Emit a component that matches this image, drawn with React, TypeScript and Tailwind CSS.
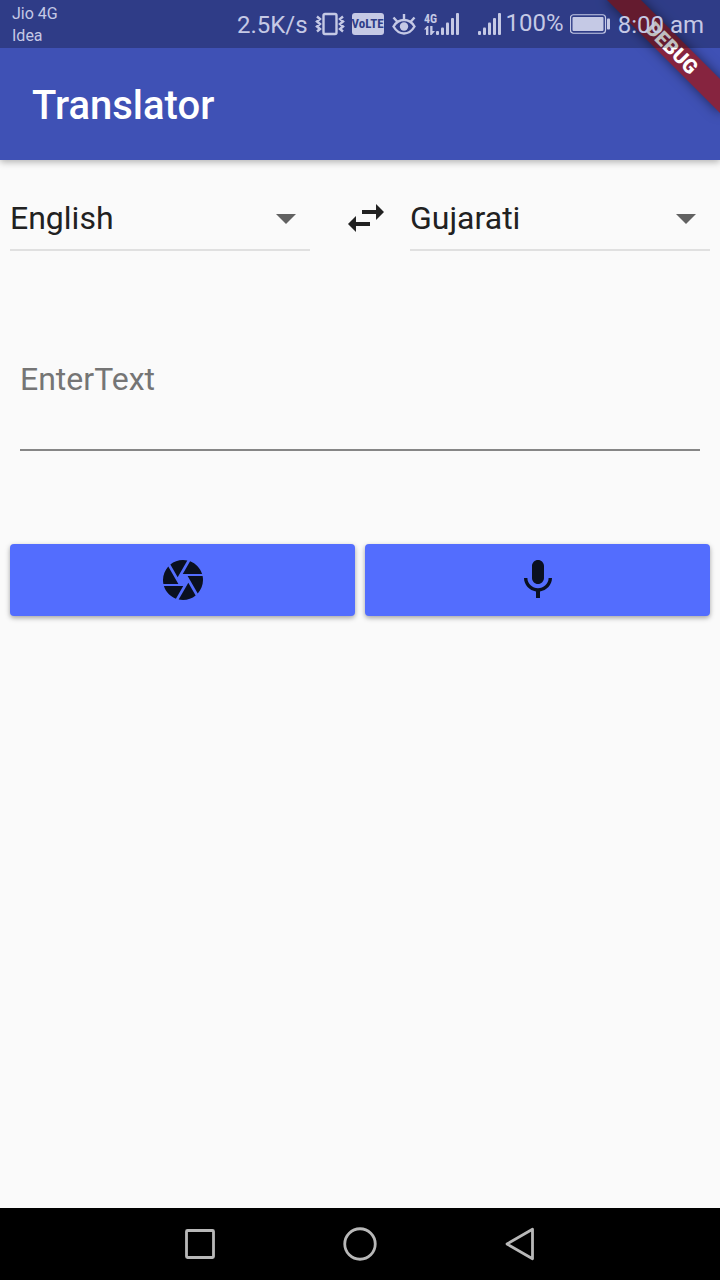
import { useState } from "react";

const LANGUAGES = ["English", "Gujarati", "Hindi", "French", "Spanish"];

function VibrateIcon() {
  return (
    <svg className="h-6 w-8 shrink-0" viewBox="0 0 32 24" fill="none" stroke="currentColor" aria-hidden="true">
      <rect x="9.500" y="2" width="13" height="20" rx="1.500" strokeWidth="2.400" />
      <path d="M3 4.500l3 2.500-3 2.500 3 2.500-3 2.500 3 2.500-3 2.500M29 4.500l-3 2.500 3 2.500-3 2.500 3 2.500-3 2.500 3 2.500" strokeWidth="2.400" />
    </svg>
  );
}

function EyeIcon() {
  return (
    <svg className="h-6 w-6 shrink-0" viewBox="0 0 24 24" fill="none" stroke="currentColor" strokeWidth="2.400" aria-hidden="true">
      <path d="M1.500 14.500C4 10.300 7.700 8 12 8s8 2.300 10.500 6.500c-2.500 4.200-6.200 7-10.500 7s-8-2.800-10.500-7z" />
      <circle cx="12" cy="14.500" r="4.200" fill="currentColor" stroke="none" />
      <path d="M12 8V2M5.500 10L1.500 5.500M18.500 10l4-4.500" />
    </svg>
  );
}

function DataSignalIcon() {
  return (
    <svg className="h-6 w-9 shrink-0" viewBox="0 0 36 24" fill="currentColor" aria-hidden="true">
      <text x="0" y="10.500" fontFamily="'Roboto Condensed', 'Liberation Sans Narrow', Roboto, sans-serif" fontSize="12" fontWeight="700">4G</text>
      <path d="M3 14L0 17.500h2V23h2.400v-9zM6.200 14v9h1.400L11 19H8.500v-5z" />
      <rect x="12" y="19" width="3" height="4" rx="1" />
      <rect x="17" y="15.500" width="3" height="7.500" rx="1" />
      <rect x="22" y="10.500" width="3" height="12.500" rx="1" />
      <rect x="27" y="6" width="3" height="17" rx="1" />
      <rect x="32" y="1" width="3" height="22" rx="1" />
    </svg>
  );
}

function SignalIcon() {
  return (
    <svg className="h-6 w-6 shrink-0" viewBox="0 0 24 24" fill="currentColor" aria-hidden="true">
      <rect x="0" y="19" width="3" height="4" rx="1" />
      <rect x="5" y="15.500" width="3" height="7.500" rx="1" />
      <rect x="10" y="10.500" width="3" height="12.500" rx="1" />
      <rect x="15" y="6" width="3" height="17" rx="1" />
      <rect x="20" y="1" width="3" height="22" rx="1" />
    </svg>
  );
}

function BatteryIcon() {
  return (
    <svg className="h-5 w-10 shrink-0" viewBox="0 0 40 20" fill="currentColor" aria-hidden="true">
      <rect x="0.500" y="0.750" width="35" height="18.500" rx="3" fill="none" stroke="currentColor" strokeWidth="1.200" />
      <rect x="2.500" y="3" width="31" height="14" rx="1" />
      <rect x="37" y="4.500" width="3" height="11" rx="0.800" />
    </svg>
  );
}

function StatusBar() {
  return (
    <div className="relative flex h-12 items-center justify-between bg-black/25 pt-0.5 pr-4 pl-3 text-2xl leading-6 text-[#c5c9e5]">
      <div className="text-base leading-[22px] whitespace-nowrap">
        <p>Jio 4G</p>
        <p>Idea</p>
      </div>
      <div className="flex items-center whitespace-nowrap">
        <span className="mr-2">2.5K/s</span>
        <div className="-ml-0.5 flex items-center gap-2 pb-0.5">
          <VibrateIcon />
          <span className="-ml-0.5 flex h-[22px] w-8 items-center justify-center rounded-[3px] bg-[#c5c9e5] font-['Roboto_Condensed','Liberation_Sans_Narrow',Roboto,sans-serif] text-[13px] font-bold text-[#2f3d88]">
            VoLTE
          </span>
          <EyeIcon />
          <DataSignalIcon />
        </div>
        <div className="ml-[18px] flex items-center pb-0.5">
          <SignalIcon />
          <span className="ml-1 pb-0.5">100%</span>
        </div>
        <div className="ml-1.5 flex items-center gap-2">
          <span className="pb-0.5">
            <BatteryIcon />
          </span>
          <span>8:00 am</span>
        </div>
      </div>
    </div>
  );
}

function DebugBanner() {
  return (
    <div className="absolute top-9 -right-8 flex h-6 w-40 rotate-45 items-center justify-center bg-[#86243f] text-xl leading-6 font-black text-white shadow-[0_0_12px_rgba(0,0,0,0.5)]">
      DEBUG
    </div>
  );
}

function LanguageSelect({ label, value, onChange }: { label: string; value: string; onChange: (v: string) => void }) {
  return (
    <div className="relative min-w-0 flex-1 border-b-2 border-[#e0e0e0] pb-[7px]">
      <select
        aria-label={label}
        value={value}
        onChange={(e) => onChange(e.target.value)}
        className="block h-12 w-full appearance-none bg-transparent p-0 text-[32px] text-[#212121] outline-none"
      >
        {LANGUAGES.map((l) => (
          <option key={l}>{l}</option>
        ))}
      </select>
      <svg className="pointer-events-none absolute top-0 right-0 size-12 text-[#616161]" viewBox="0 0 24 24" fill="currentColor" aria-hidden="true">
        <path d="M7 10l5 5 5-5z" />
      </svg>
    </div>
  );
}

const actionClass =
  "flex h-[72px] flex-1 items-center justify-center rounded bg-[#536dfe] text-[#0a1020] shadow-[0_2px_5px_rgba(0,0,0,0.35)]";

export default function App() {
  const [from, setFrom] = useState("English");
  const [to, setTo] = useState("Gujarati");
  const [text, setText] = useState("");

  const swap = () => {
    setFrom(to);
    setTo(from);
  };

  return (
    <div className="flex min-h-screen flex-col overflow-hidden bg-[#fafafa] font-['Roboto',sans-serif]">
      <header className="relative bg-[#3f51b5] shadow-[0_2px_7px_rgba(0,0,0,0.3)]">
        <DebugBanner />
        <StatusBar />
        <h1 className="flex h-28 items-center px-8 pt-1 text-[40px] font-medium text-white">Translator</h1>
      </header>

      <main className="flex-1 px-[10px] pt-[34px]">
        <div className="flex items-start">
          <LanguageSelect label="Translate from" value={from} onChange={setFrom} />
          <div className="flex w-[100px] justify-center pl-3">
            <button type="button" aria-label="Swap languages" onClick={swap} className="text-[#212121]">
              <svg className="size-12" viewBox="0 0 24 24" fill="currentColor" aria-hidden="true">
                <path d="M6.990 11L3 15l3.990 4v-3H14v-2H6.990v-3zM21 9l-3.990-4v3H10v2h7.010v3L21 9z" />
              </svg>
            </button>
          </div>
          <LanguageSelect label="Translate to" value={to} onChange={setTo} />
        </div>

        <div className="mt-[109px] px-[10px]">
          <textarea
            aria-label="Enter text"
            placeholder="EnterText"
            rows={1}
            value={text}
            onChange={(e) => setText(e.target.value)}
            className="block h-[91px] w-full resize-none border-b-2 border-[#868686] bg-transparent p-0 text-[32px] leading-[38px] text-[#212121] outline-none placeholder:text-[#757575]"
          />
        </div>

        <div className="mt-[93px] flex gap-[10px]">
          <button type="button" aria-label="Scan with camera" className={actionClass}>
            <svg className="size-12" viewBox="0 0 24 24" fill="currentColor" aria-hidden="true">
              <path d="M9.400 10.500l4.770-8.260C13.470 2.090 12.750 2 12 2c-2.400 0-4.600.85-6.320 2.250l3.660 6.350.06-.1zM21.540 9c-.92-2.920-3.150-5.260-6-6.340L11.880 9h9.660zm.26 1h-7.490l.29.5 4.760 8.250C21 16.970 22 14.610 22 12c0-.69-.07-1.350-.2-2zM8.540 12l-3.900-6.750C3.010 7.030 2 9.390 2 12c0 .69.07 1.350.2 2h7.490l-1.150-2zm-6.080 3c.92 2.920 3.150 5.260 6 6.340L12.120 15H2.460zm11.270 0l-3.900 6.760c.7.15 1.420.24 2.170.24 2.400 0 4.600-.85 6.320-2.250l-3.660-6.350-.93 1.600z" />
            </svg>
          </button>
          <button type="button" aria-label="Speak" className={actionClass}>
            <svg className="size-12" viewBox="0 0 24 24" fill="currentColor" aria-hidden="true">
              <path d="M12 14c1.660 0 2.990-1.340 2.990-3L15 5c0-1.660-1.340-3-3-3S9 3.340 9 5v6c0 1.660 1.340 3 3 3zm5.300-3c0 3-2.540 5.100-5.300 5.100S6.700 14 6.700 11H5c0 3.410 2.720 6.230 6 6.720V21h2v-3.280c3.280-.48 6-3.300 6-6.720h-1.700z" />
            </svg>
          </button>
        </div>
      </main>

      <nav aria-label="System navigation" className="flex h-[72px] items-center justify-center bg-black text-[#b8b8b8]">
        <button type="button" aria-label="Recent apps" className="flex w-40 justify-center">
          <svg className="size-9" viewBox="0 0 36 36" fill="none" stroke="currentColor" strokeWidth="2.800" aria-hidden="true">
            <rect x="4.500" y="4.500" width="27" height="27" rx="1" />
          </svg>
        </button>
        <button type="button" aria-label="Home" className="flex w-40 justify-center">
          <svg className="size-9" viewBox="0 0 36 36" fill="none" stroke="currentColor" strokeWidth="2.800" aria-hidden="true">
            <circle cx="18" cy="18" r="15.250" />
          </svg>
        </button>
        <button type="button" aria-label="Back" className="flex w-40 justify-center">
          <svg className="size-9" viewBox="0 0 36 36" fill="none" stroke="currentColor" strokeWidth="2.800" strokeLinejoin="round" aria-hidden="true">
            <path d="M30.500 3.200v29.600L5 18z" />
          </svg>
        </button>
      </nav>
    </div>
  );
}
